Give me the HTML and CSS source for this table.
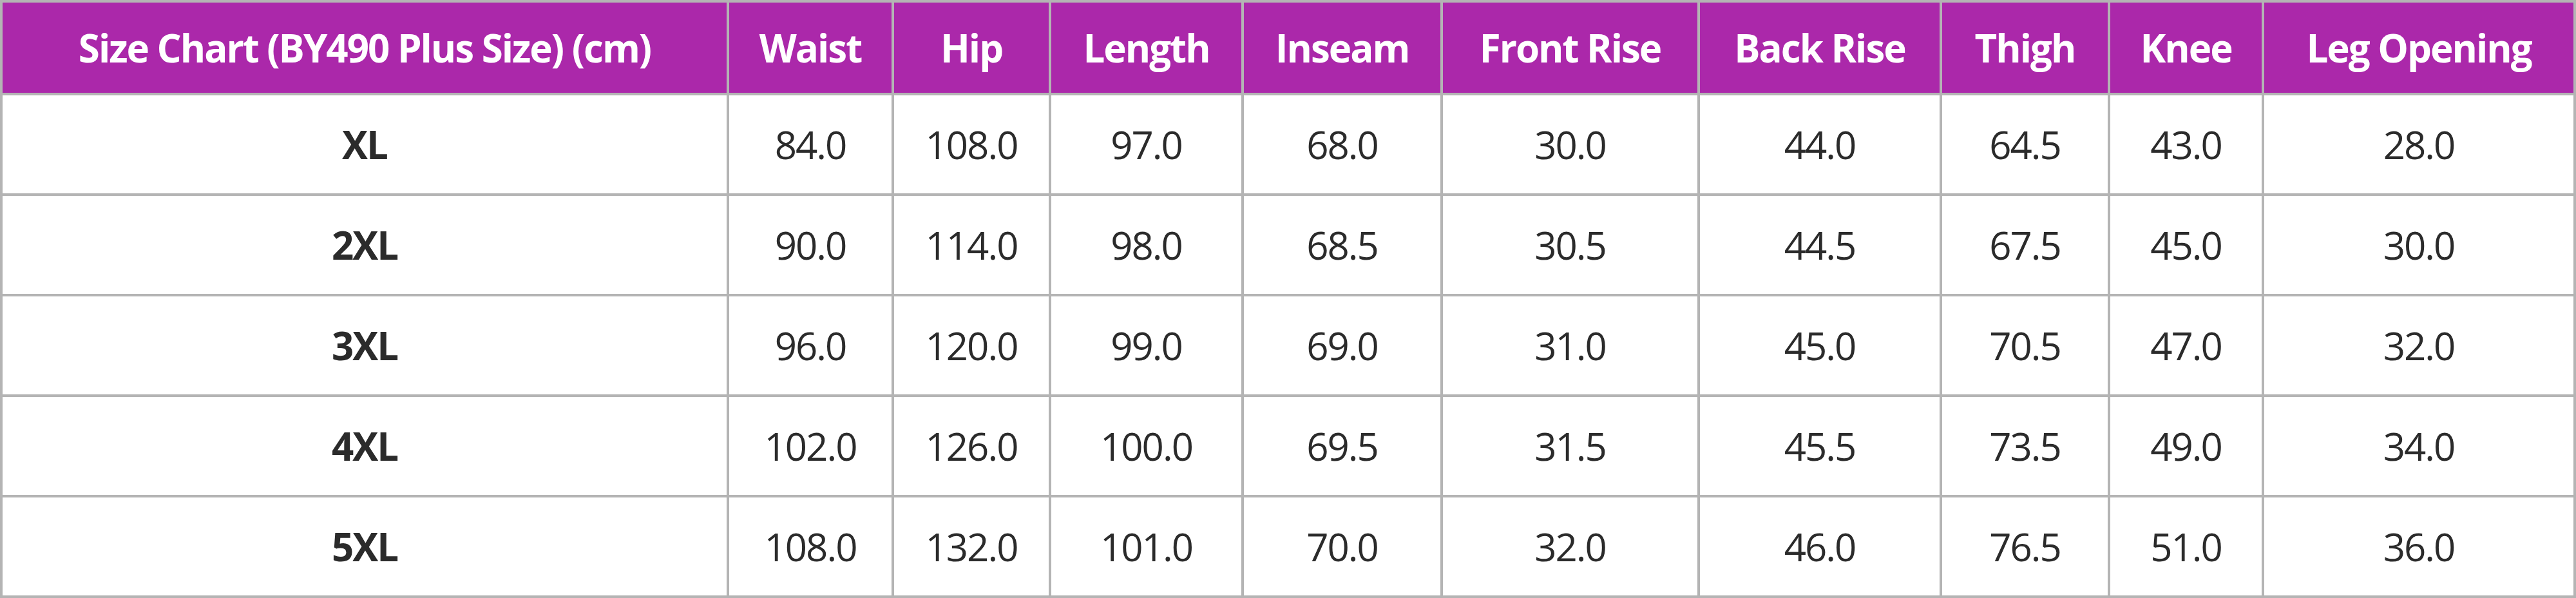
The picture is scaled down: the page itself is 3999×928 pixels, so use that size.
FILE: index.html
```html
<!DOCTYPE html>
<html lang="en">
<head>
<meta charset="utf-8">
<title>Size Chart (BY490 Plus Size)</title>
<link rel="stylesheet" href="styles.css">
</head>
<body>
<div class="chart">
  <div class="cell head">Size Chart (BY490 Plus Size) (cm)</div>
  <div class="cell head">Waist</div>
  <div class="cell head">Hip</div>
  <div class="cell head">Length</div>
  <div class="cell head">Inseam</div>
  <div class="cell head">Front Rise</div>
  <div class="cell head">Back Rise</div>
  <div class="cell head">Thigh</div>
  <div class="cell head">Knee</div>
  <div class="cell head">Leg Opening</div>

  <div class="cell size">XL</div>
  <div class="cell">84.0</div><div class="cell">108.0</div><div class="cell">97.0</div><div class="cell">68.0</div><div class="cell">30.0</div><div class="cell">44.0</div><div class="cell">64.5</div><div class="cell">43.0</div><div class="cell">28.0</div>

  <div class="cell size">2XL</div>
  <div class="cell">90.0</div><div class="cell">114.0</div><div class="cell">98.0</div><div class="cell">68.5</div><div class="cell">30.5</div><div class="cell">44.5</div><div class="cell">67.5</div><div class="cell">45.0</div><div class="cell">30.0</div>

  <div class="cell size">3XL</div>
  <div class="cell">96.0</div><div class="cell">120.0</div><div class="cell">99.0</div><div class="cell">69.0</div><div class="cell">31.0</div><div class="cell">45.0</div><div class="cell">70.5</div><div class="cell">47.0</div><div class="cell">32.0</div>

  <div class="cell size">4XL</div>
  <div class="cell">102.0</div><div class="cell">126.0</div><div class="cell">100.0</div><div class="cell">69.5</div><div class="cell">31.5</div><div class="cell">45.5</div><div class="cell">73.5</div><div class="cell">49.0</div><div class="cell">34.0</div>

  <div class="cell size">5XL</div>
  <div class="cell">108.0</div><div class="cell">132.0</div><div class="cell">101.0</div><div class="cell">70.0</div><div class="cell">32.0</div><div class="cell">46.0</div><div class="cell">76.5</div><div class="cell">51.0</div><div class="cell">36.0</div>
</div>
</body>
</html>
```

FILE: styles.css
```css
html, body {
  margin: 0;
  padding: 0;
  background: #ffffff;
}

.chart {
  display: grid;
  grid-template-columns: 1124px 252px 240px 295px 305px 395px 372px 257px 235px 480px;
  grid-template-rows: 140px repeat(5, 152px);
  gap: 4px;
  padding: 4px;
  width: 3999px;
  box-sizing: border-box;
  background: #b4b4b4;
  font-family: "Open Sans", "Noto Sans", sans-serif;
}

.cell {
  display: flex;
  align-items: center;
  justify-content: center;
  background: #ffffff;
  color: #2b2b2b;
  font-size: 60px;
  letter-spacing: -2px;
  white-space: nowrap;
}

.head {
  background: #ab28aa;
  color: #ffffff;
  font-weight: 700;
  font-size: 60px;
  letter-spacing: -2px;
}

.size {
  font-weight: 700;
}
```
